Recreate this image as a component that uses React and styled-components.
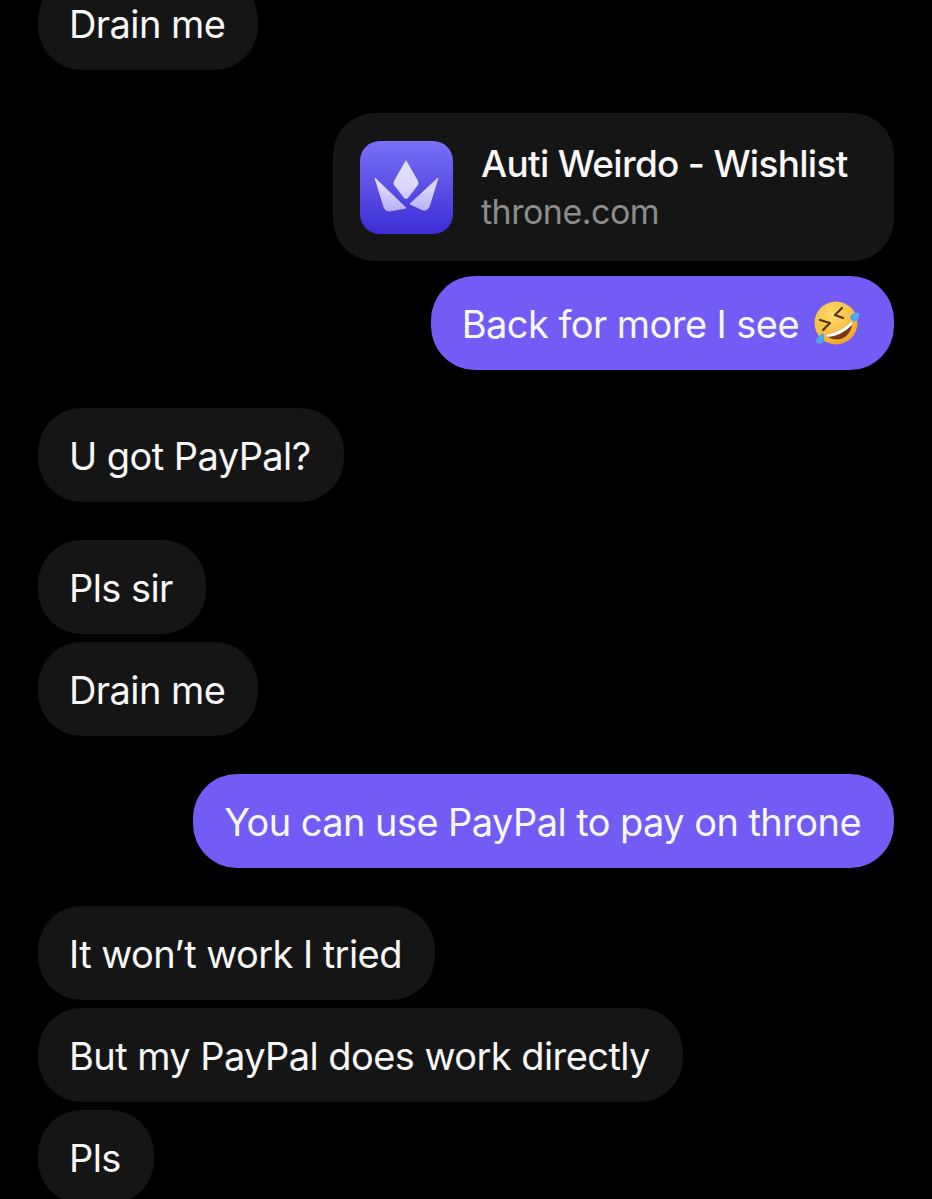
import React from "react";
import styled, { createGlobalStyle } from "styled-components";

const Global = createGlobalStyle`
  html, body {
    margin: 0;
    background: #000;
  }
  body {
    font-family: Inter, "Liberation Sans", sans-serif;
  }
`;

const Screen = styled.div`
  width: 932px;
  height: 1199px;
  overflow: hidden;
  background: #000;
`;

const Thread = styled.div`
  display: flex;
  flex-direction: column;
  margin-top: -24px;
  padding: 0 38px;
`;

const Bubble = styled.div`
  align-self: ${(p) => (p.$mine ? "flex-end" : "flex-start")};
  display: flex;
  align-items: center;
  gap: 14px;
  height: 94px;
  box-sizing: border-box;
  padding: 2px 33px 0 31px;
  margin-top: ${(p) => p.$gap}px;
  border-radius: 44px;
  background: ${(p) => (p.$mine ? "#735bf6" : "#151515")};
  color: #f7f7f7;
  font-size: 38px;
  letter-spacing: -0.57px;
  white-space: nowrap;
`;

const LinkCard = styled.div`
  align-self: flex-end;
  display: flex;
  align-items: center;
  gap: 28px;
  width: 561px;
  height: 148px;
  box-sizing: border-box;
  padding-left: 27px;
  margin-top: 43px;
  border-radius: 42px;
  background: #151515;
`;

const LinkText = styled.div`
  display: flex;
  flex-direction: column;
  gap: 4px;
  padding-top: 2px;
`;

const LinkTitle = styled.div`
  color: #f7f7f7;
  font-size: 37px;
  font-weight: 500;
  line-height: 44px;
  letter-spacing: -0.7px;
`;

const LinkHost = styled.div`
  color: #8c8c8c;
  font-size: 34px;
  line-height: 44px;
  letter-spacing: -0.5px;
`;

const ThroneIcon = () => (
  <svg width="93" height="93" viewBox="0 0 93 93">
    <defs>
      <linearGradient id="tile" x1="0" y1="0" x2="0" y2="1">
        <stop offset="0" stopColor="#7a70f6" />
        <stop offset="1" stopColor="#3d2dd4" />
      </linearGradient>
      <linearGradient id="gem" gradientUnits="userSpaceOnUse" x1="0" y1="19" x2="0" y2="72">
        <stop offset="0" stopColor="#e6e3fd" />
        <stop offset="0.55" stopColor="#d8d4fb" />
        <stop offset="1" stopColor="#b4acf4" />
      </linearGradient>
    </defs>
    <rect width="93" height="93" rx="20" fill="url(#tile)" />
    <path d="M46 19 L58 40 Q59 42 58 44 L48 57 Q46 59 44 57 L34 44 Q33 42 34 40 Z" fill="url(#gem)" />
    <path d="M15 37 L46 67 L29 70 Q25 70 24 66 Z" fill="url(#gem)" stroke="url(#gem)" strokeWidth="1" strokeLinejoin="round" />
    <path d="M78 37 L69 66 Q67 70 63 69 L50 63 Z" fill="url(#gem)" stroke="url(#gem)" strokeWidth="1" strokeLinejoin="round" />
  </svg>
);

const LaughEmoji = () => (
  <svg width="48" height="48" viewBox="0 0 48 48">
    <defs>
      <radialGradient id="face" cx="0.4" cy="0.3" r="0.8">
        <stop offset="0" stopColor="#fbdc6b" />
        <stop offset="0.7" stopColor="#f6b93a" />
        <stop offset="1" stopColor="#e8952a" />
      </radialGradient>
    </defs>
    <circle cx="23" cy="23" r="21.5" fill="url(#face)" />
    <path d="M12 35 Q28 32 39 21 Q40 31 32 37 Q22 43 12 35 Z" fill="#7a3a12" />
    <path d="M12 35 Q28 32 39 21 L39 25 Q28 36 15 37 Z" fill="#fff" />
    <path d="M7 20 L17 23 L10 30" fill="none" stroke="#5a3210" strokeWidth="2.2" strokeLinecap="round" strokeLinejoin="round" />
    <path d="M29 8 L22 15 L30 18" fill="none" stroke="#5a3210" strokeWidth="2.2" strokeLinecap="round" strokeLinejoin="round" />
    <path d="M3 42 Q3 37 10 33 Q13 39 9 43 Q5 45 3 42 Z" fill="#4fa6e8" />
    <path d="M37 17 Q39 12 46 13 Q47 18 43 21 Q38 22 37 17 Z" fill="#4fa6e8" />
  </svg>
);

const App = () => (
  <Screen>
    <Global />
    <Thread>
      <Bubble $gap={0}>Drain me</Bubble>
      <LinkCard>
        <ThroneIcon />
        <LinkText>
          <LinkTitle>Auti Weirdo - Wishlist</LinkTitle>
          <LinkHost>throne.com</LinkHost>
        </LinkText>
      </LinkCard>
      <Bubble $mine $gap={15}>
        Back for more I see <LaughEmoji />
      </Bubble>
      <Bubble $gap={38}>U got PayPal?</Bubble>
      <Bubble $gap={38}>Pls sir</Bubble>
      <Bubble $gap={8}>Drain me</Bubble>
      <Bubble $mine $gap={38}>You can use PayPal to pay on throne</Bubble>
      <Bubble $gap={38}>It won’t work I tried</Bubble>
      <Bubble $gap={8}>But my PayPal does work directly</Bubble>
      <Bubble $gap={8}>Pls</Bubble>
    </Thread>
  </Screen>
);

export default App;
